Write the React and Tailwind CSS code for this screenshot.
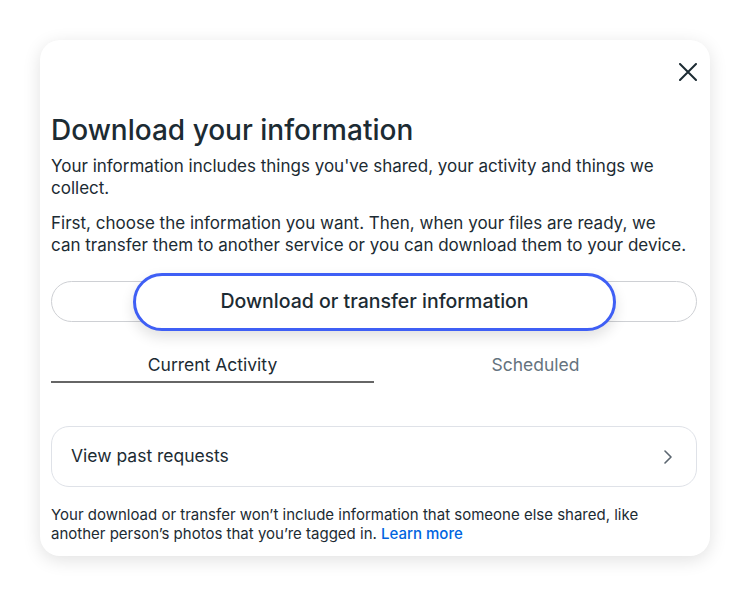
export default function App() {
  return (
    <div className="min-h-screen bg-white pt-[40px] font-['Inter','Liberation_Sans',sans-serif] text-[#1c2b33]">
      <div className="ml-[40px] w-[670px] rounded-[20px] bg-white pl-[11px] pr-[13px] pb-[13px] shadow-[0_4px_18px_rgba(0,0,0,0.12)]">
        <div className="flex justify-end pt-[23px]">
          <button className="text-[#1c2b33]" aria-label="Close">
            <svg width="18" height="18" viewBox="0 0 18 18" fill="none" stroke="currentColor" strokeWidth="2" strokeLinecap="round">
              <path d="M1 1l16 16M17 1L1 17" />
            </svg>
          </button>
        </div>

        <h1 className="mt-[32px] text-[28px] leading-[34px] font-medium">Download your information</h1>
        <p className="mt-[8px] text-[17px] leading-[22px]">
          Your information includes things you've shared, your activity and things we
          <br />
          collect.
        </p>
        <p className="mt-[13px] text-[17px] leading-[22px]">
          First, choose the information you want. Then, when your files are ready, we
          <br />
          can transfer them to another service or you can download them to your device.
        </p>

        <div className="relative mt-[25px] h-[41px] rounded-full border border-[#ced0d4]">
          <button className="absolute left-[81px] top-[-9px] h-[58px] w-[483px] rounded-full border-[3px] border-[#3f5ff5] bg-white text-[19.5px] font-medium text-[#1c2b33] shadow-[0_6px_14px_rgba(0,0,0,0.12)]">
            Download or transfer information
          </button>
        </div>

        <div className="mt-[32px] flex">
          <div className="flex-1 border-b-[2.5px] border-[#666] pb-[5px] text-center text-[17.5px] leading-[22px]">
            Current Activity
          </div>
          <div className="flex-1 pb-[5px] text-center text-[17.5px] leading-[22px] text-[#65737e]">
            Scheduled
          </div>
        </div>

        <div className="mt-[43px] flex h-[61px] items-center justify-between rounded-[18px] border border-[#dfe2e8] pl-[19px] pr-[24px]">
          <span className="text-[17.5px]">View past requests</span>
          <svg width="8" height="14" viewBox="0 0 8 14" fill="none" stroke="#5b6670" strokeWidth="1.6" strokeLinecap="round" strokeLinejoin="round">
            <path d="M1 1l6 6-6 6" />
          </svg>
        </div>

        <p className="mt-[18px] text-[15px] leading-[19px]">
          Your download or transfer won’t include information that someone else shared, like
          <br />
          another person’s photos that you’re tagged in.{' '}
          <a href="#" className="font-medium text-[#0064e0]">Learn more</a>
        </p>
      </div>
    </div>
  );
}
